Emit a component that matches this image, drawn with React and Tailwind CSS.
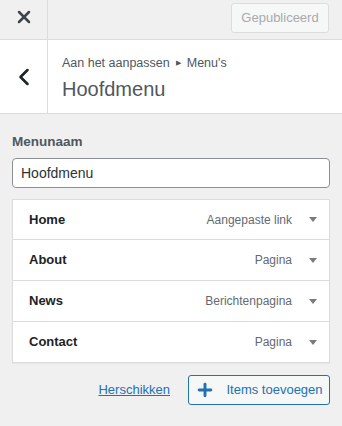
import { X, ChevronLeft, Plus } from 'lucide-react';

const items = [
  { title: 'Home', type: 'Aangepaste link' },
  { title: 'About', type: 'Pagina' },
  { title: 'News', type: 'Berichtenpagina' },
  { title: 'Contact', type: 'Pagina' },
];

const Caret = () => (
  <svg width="8" height="5" viewBox="0 0 8 5" className="ml-[17px]">
    <path d="M0 0h8L4 5z" fill="#787c82" />
  </svg>
);

const App = () => {
  return (
    <div
      className="w-[342px] h-[426px] bg-[#f0f0f1] text-[#1d2327] overflow-hidden"
      style={{ fontFamily: '"Liberation Sans", Arial, sans-serif' }}
    >
      {/* top bar */}
      <div className="flex h-[40px] border-b border-[#dcdcde]">
        <button className="w-[48px] flex justify-center pt-[7px] border-r border-[#dcdcde] text-[#3c434a]">
          <X size={20} strokeWidth={3} />
        </button>
        <div className="flex-1 flex justify-end items-start pt-[3px] pr-[13px]">
          <button className="h-[30px] w-[98px] rounded-[3px] border border-[#dcdcde] bg-[#f6f7f7] text-[#a7aaad] text-[13px]">
            Gepubliceerd
          </button>
        </div>
      </div>

      {/* section header */}
      <div className="flex h-[74px] bg-white border-b border-[#dcdcde]">
        <button className="w-[48px] flex items-center justify-center border-r border-[#dcdcde] text-[#1d2327]">
          <ChevronLeft size={28} strokeWidth={2.2} />
        </button>
        <div className="flex-1 pl-[14px] pt-[13px]">
          <div className="flex items-center gap-[6px] text-[12.5px] text-[#50575e] leading-[20px]">
            <span>Aan het aanpassen</span>
            <span className="text-[7px]">▶</span>
            <span>Menu's</span>
          </div>
          <div className="text-[20px] leading-[28px] text-[#50575e] mt-[2px]">Hoofdmenu</div>
        </div>
      </div>

      {/* body */}
      <div className="px-[12px] pt-[18px]">
        <div className="text-[13.5px] font-bold text-[#50575e] leading-[20px]">Menunaam</div>
        <div className="mt-[6px] h-[30px] rounded-[4px] border border-[#8c8f94] bg-white px-[8px] flex items-center text-[14px] text-[#2c3338]">
          Hoofdmenu
        </div>

        <div className="mt-[11px] bg-white border border-[#dcdcde] shadow-[0_1px_1px_rgba(0,0,0,0.04)]">
          {items.map((item, i) => (
            <div
              key={item.title}
              className={`flex items-center pl-[16px] pr-[12px] ${i > 0 ? 'h-[41px] border-t border-[#dcdcde]' : 'h-[39px]'}`}
            >
              <span className="flex-1 text-[13px] font-bold text-[#1d2327]">{item.title}</span>
              <span className="text-[12px] text-[#646970]">{item.type}</span>
              <Caret />
            </div>
          ))}
        </div>

        <div className="mt-[12px] flex justify-end items-center gap-[18px]">
          <a className="text-[13px] text-[#2271b1] underline">Herschikken</a>
          <button className="h-[30px] w-[142px] rounded-[3px] border border-[#2271b1] bg-[#f6f7f7] text-[#2271b1] text-[13px] flex items-center justify-center gap-[11px]">
            <Plus size={20} strokeWidth={3.5} />
            <span>Items toevoegen</span>
          </button>
        </div>
      </div>
    </div>
  );
};

export default App;
